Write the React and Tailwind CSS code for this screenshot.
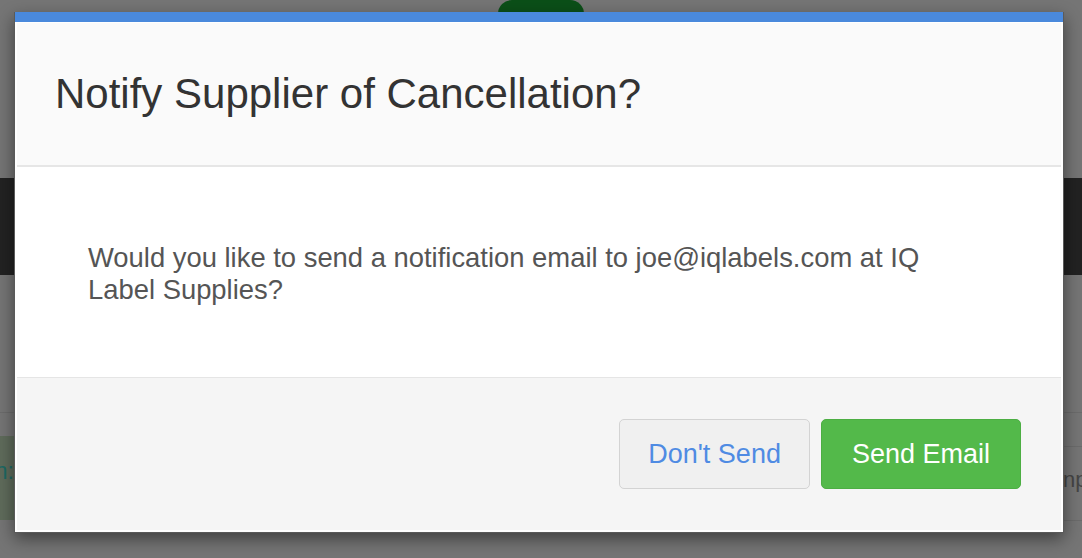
import React from 'react';

const font = { fontFamily: '"Liberation Sans", Arial, sans-serif' };

function Backdrop() {
    return (
        <div className="flex flex-col w-full h-full bg-[#757575]">
            <div className="h-[178px] flex justify-center">
                <div className="w-[86px] h-[14px] rounded-t-[30px] bg-[#0b4f18]" />
            </div>
            <div className="h-[97px] bg-[#222222]" />
            <div className="h-[138px] border-b border-[#6b6b6b]" />
            <div className="h-[110px] flex">
                <div className="w-[540px] shrink-0 pt-[23px]">
                    <div className="h-[84px] bg-[#5f6b5b] pt-[21px]">
                        <div className="w-[14px] flex justify-end overflow-hidden">
                            <span className="whitespace-nowrap text-[23px] leading-[28px] text-[#1d6863]">Location:</span>
                        </div>
                    </div>
                </div>
                <div className="flex-1 min-w-0 flex flex-col overflow-hidden">
                    <div className="h-[34px] border-b border-[#6b6b6b]" />
                    <div className="h-[74px] border-b border-[#6b6b6b] pt-[20px] pl-[517px]">
                        <span className="whitespace-nowrap text-[22px] leading-[26px] text-[#454545]">Inputs</span>
                    </div>
                </div>
            </div>
        </div>
    );
}

function CancelModal() {
    return (
        <div className="absolute left-[14px] top-[12px] w-[1050px] h-[521px] flex flex-col bg-white border-x border-b border-[#5a5a5a] shadow-[0_6px_16px_rgba(0,0,0,0.45)]">
            <div className="h-[10px] bg-[#4a89dc]" />
            <div className="flex-1 flex flex-col px-[2px] pt-[1px] pb-[2px]">
                <div className="h-[144px] bg-[#fafafa] border-b-2 border-[#e6e6e6] flex items-center pl-[38px]">
                    <h2 className="text-[42px] leading-[46px] text-[#333333]">Notify Supplier of Cancellation?</h2>
                </div>
                <div className="h-[210px] bg-white pl-[71px] pr-[90px] pt-[75px]">
                    <p className="text-[27.4px] leading-[32px] text-[#555555]">
                        Would you like to send a notification email to joe@iqlabels.com at IQ Label Supplies?
                    </p>
                </div>
                <div className="flex-1 bg-[#f5f5f5] border-t border-[#e5e5e5] flex justify-end items-center gap-[11px] pr-[40px]">
                    <button className="h-[70px] px-[28px] rounded-[5px] border border-[#d3d3d3] bg-[#f0f0f0] text-[27px] text-[#4f8be3]">
                        Don't Send
                    </button>
                    <button className="h-[70px] px-[30px] rounded-[5px] border border-[#4cae43] bg-[#53b94a] text-[27px] text-white">
                        Send Email
                    </button>
                </div>
            </div>
        </div>
    );
}

export default function App() {
    return (
        <div className="relative w-[1082px] h-[558px] overflow-hidden" style={font}>
            <Backdrop />
            <CancelModal />
        </div>
    );
}
